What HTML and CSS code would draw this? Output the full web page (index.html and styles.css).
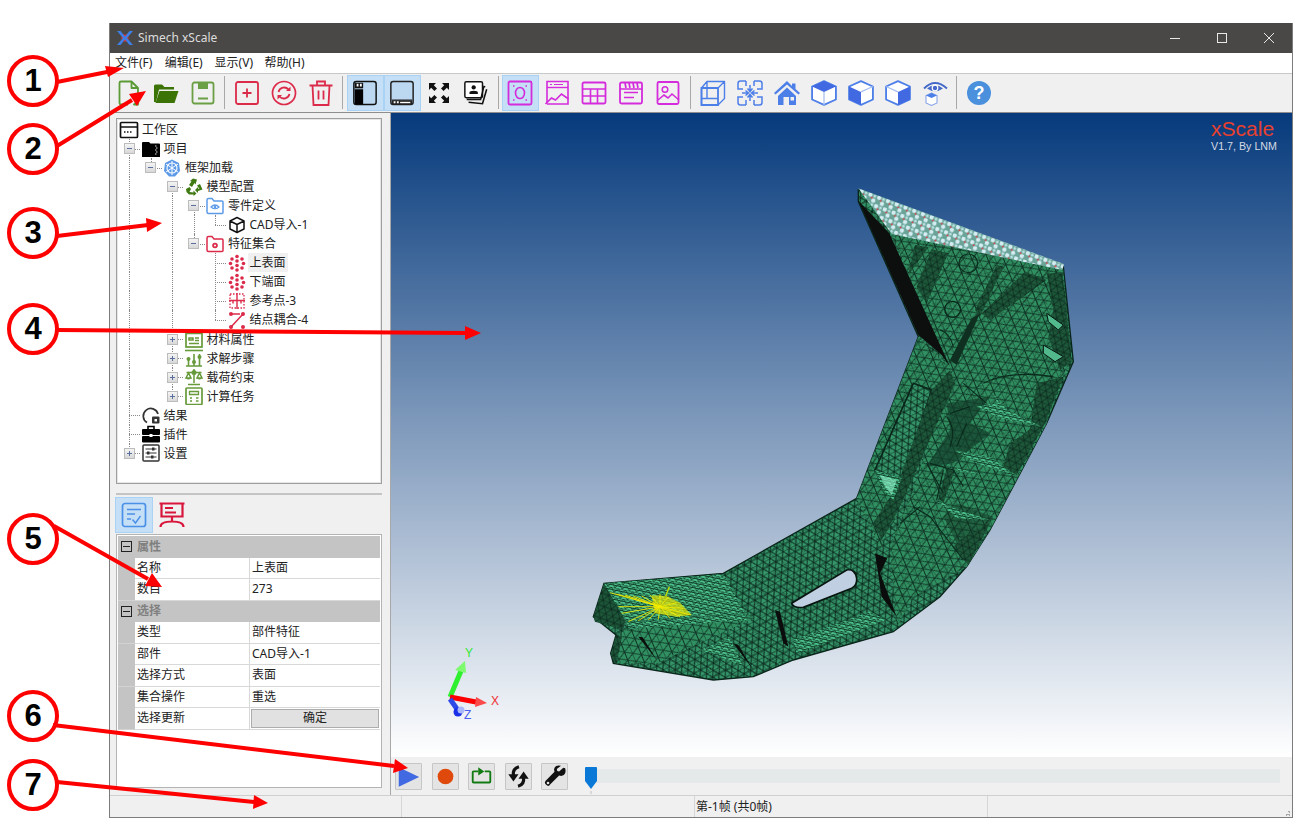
FILE: index.html
```html
<!DOCTYPE html>
<html lang="zh">
<head>
<meta charset="utf-8">
<title>Simech xScale</title>
<link rel="stylesheet" href="styles.css">
</head>
<body>
<svg class="defs" width="0" height="0" aria-hidden="true">
  <defs>
    <pattern id="mesh" width="22" height="36" patternUnits="userSpaceOnUse" patternTransform="rotate(-28)">
      <rect width="22" height="36" fill="#35966a"/>
      <path d="M0 0H22M0 18H22M0 0L11 18L22 0M0 36L11 18L22 36" fill="none" stroke="#0c2e20" stroke-width="2.800"/>
    </pattern>
    <pattern id="meshb" width="26" height="44" patternUnits="userSpaceOnUse" patternTransform="rotate(68)">
      <rect width="26" height="44" fill="#319062"/>
      <path d="M0 0H26M0 22H26M0 0L13 22L26 0M0 44L13 22L26 44" fill="none" stroke="#0c2e20" stroke-width="2.800"/>
    </pattern>
    <pattern id="meshd" width="22" height="36" patternUnits="userSpaceOnUse" patternTransform="rotate(20)">
      <rect width="22" height="36" fill="#1d5639"/>
      <path d="M0 0H22M0 18H22M0 0L11 18L22 0M0 36L11 18L22 36" fill="none" stroke="#0a251a" stroke-width="2.400"/>
    </pattern>
    <pattern id="meshl" width="22" height="14" patternUnits="userSpaceOnUse" patternTransform="rotate(12)">
      <rect width="22" height="14" fill="#4cc08a"/>
      <path d="M0 0H22M0 7H22M0 0L11 14L22 0" fill="none" stroke="#0c3523" stroke-width="2.600"/>
    </pattern>
    <pattern id="over" width="47" height="71" patternUnits="userSpaceOnUse" patternTransform="rotate(37)">
      <path d="M0 0L47 12M0 35L47 47M0 0L23 71M47 12L30 71M12 35L40 0" fill="none" stroke="#0a2a1c" stroke-width="2" opacity=".55"/>
    </pattern>
    <pattern id="dots" width="28" height="27" patternUnits="userSpaceOnUse" patternTransform="rotate(20.500 835 60)">
      <rect width="28" height="27" fill="#6aa498"/>
      <circle cx="6" cy="6" r="6.500" fill="#d3edf2"/>
      <circle cx="20" cy="20" r="6.500" fill="#d3edf2"/>
      <circle cx="20" cy="6" r="4.500" fill="#b7e0e2"/>
      <circle cx="13" cy="13" r="2.800" fill="#e5333a"/>
    </pattern>

    <symbol id="i-new" viewBox="0 0 26 26"><path d="M12 24.500H5a1.500 1.500 0 0 1-1.500-1.500V3A1.500 1.500 0 0 1 5 1.500h10.500l6.500 6.500v8M15.500 1.500V8H22M18 24.500l4-3.500v3.500z" fill="none" stroke="#5b9a35" stroke-width="1.800" stroke-linejoin="round"/></symbol>
    <symbol id="i-open" viewBox="0 0 26 26"><path d="M1 22V6q0-1.500 1.500-1.500H9l2.500 2.500H21v2.500H6L3 22z" fill="#3c7306"/><path d="M6.500 11H25.500L21.500 23H2.500z" fill="#3c7306"/></symbol>
    <symbol id="i-save" viewBox="0 0 26 26"><rect x="2.500" y="2.500" width="21" height="21" rx="2" fill="none" stroke="#6b9f45" stroke-width="1.800"/><rect x="8" y="3" width="10" height="6" fill="#6b9f45"/><path d="M8 18.500H18" stroke="#6b9f45" stroke-width="2"/></symbol>
    <symbol id="i-add" viewBox="0 0 26 26"><rect x="2" y="2" width="22" height="22" rx="2" fill="none" stroke="#dc2a4a" stroke-width="1.800"/><path d="M13 8.500v9M8.500 13h9" stroke="#dc2a4a" stroke-width="1.800"/></symbol>
    <symbol id="i-sync" viewBox="0 0 26 26"><circle cx="13" cy="13" r="11.500" fill="none" stroke="#dc2a4a" stroke-width="1.700"/><path d="M7.500 12a5.800 5.800 0 0 1 10-2.500M18.500 14a5.800 5.800 0 0 1-10 2.500" fill="none" stroke="#dc2a4a" stroke-width="1.800"/><path d="M19.500 6.500v4.500h-4.500zM6.500 19.500V15H11z" fill="#dc2a4a"/></symbol>
    <symbol id="i-trash" viewBox="0 0 26 26"><path d="M1.500 5.500h23M9 5.500V1.500h8v4M4.500 5.500l1 19.500h15l1-19.500M10.500 10.500v9M15.500 10.500v9" fill="none" stroke="#dc2a4a" stroke-width="1.800"/></symbol>
    <symbol id="i-left" viewBox="0 0 28 28"><rect x="2" y="1.500" width="24" height="25" rx="2.500" fill="#bcd8f1" stroke="#111" stroke-width="1.600"/><path d="M3 10h9v16H4q-1 0-1-1z" fill="#000"/><path d="M3 3h9v6H3z" fill="#111"/><path d="M5 4h2v3H5zM8.500 4h2v3h-2z" fill="#fff"/></symbol>
    <symbol id="i-bottom" viewBox="0 0 28 28"><rect x="2" y="1.500" width="24" height="25" rx="2.500" fill="#bcd8f1" stroke="#222" stroke-width="1.600"/><path d="M3 21h22v1.500H3z" fill="#222"/><path d="M3 22.500h22V25q0 1-1 1H4q-1 0-1-1z" fill="#222"/><path d="M5 23h2v2H5zM8.500 23h2v2h-2z" fill="#fff"/><path d="M12 23.500h11v1.500H12z" fill="#fff"/></symbol>
    <symbol id="i-fit" viewBox="0 0 26 26"><path d="M3 3h7L7.800 5.200 11 8.400 8.400 11 5.200 7.800 3 10zM23 3v7l-2.200-2.200L17.600 11 15 8.400l3.200-3.200L16 3zM3 23v-7l2.200 2.200L8.400 15 11 17.600l-3.200 3.200L10 23zM23 23h-7l2.200-2.200L15 17.600l2.600-2.600 3.200 3.200L23 16z" fill="#111"/></symbol>
    <symbol id="i-photos" viewBox="0 0 28 28"><rect x="2" y="2" width="19" height="17" rx="1.500" fill="#fff" stroke="#111" stroke-width="1.600"/><circle cx="11.500" cy="8" r="2.300" fill="#111"/><path d="M7 15v-1.500q0-2 4.500-2t4.500 2V15z" fill="#111"/><path d="M4 21h15l3.500-14 1.500.5" fill="none" stroke="#111" stroke-width="1.500"/><path d="M6 24l15 1.500 4.500-15.500" fill="none" stroke="#111" stroke-width="1.700"/></symbol>
    <symbol id="i-m1" viewBox="0 0 26 26"><rect x="1.500" y="1.500" width="23" height="23" rx="1.500" fill="none" stroke="#d42bdc" stroke-width="1.800"/><ellipse cx="13" cy="13" rx="4.500" ry="5.500" fill="none" stroke="#d42bdc" stroke-width="1.600"/><path d="M6 6h1.500M18.500 6H20M6 20h1.500M18.500 20H20" stroke="#d42bdc" stroke-width="1.400"/></symbol>
    <symbol id="i-m2" viewBox="0 0 26 26"><path d="M3 23V1.500h21V24H3" fill="none" stroke="#d42bdc" stroke-width="1.600"/><path d="M3 7.500h21" stroke="#d42bdc" stroke-width="1.400"/><path d="M6 4.500h2M10 4.500h9" stroke="#d42bdc" stroke-width="1.200"/><path d="M1.500 24l6-6 4 2 6-6 7 5" fill="none" stroke="#d42bdc" stroke-width="1.700"/></symbol>
    <symbol id="i-m3" viewBox="0 0 26 26"><rect x="1.500" y="2.500" width="23" height="21" rx="1.500" fill="none" stroke="#d42bdc" stroke-width="1.800"/><path d="M1.500 9h23M1.500 16h23M9.500 9v14.500M16.500 9v14.500" stroke="#d42bdc" stroke-width="1.600"/></symbol>
    <symbol id="i-m4" viewBox="0 0 26 26"><rect x="2" y="2.500" width="22" height="21" rx="1.500" fill="none" stroke="#d42bdc" stroke-width="1.800"/><path d="M2 9h22M6 12.500h14M6 17.500h10" stroke="#d42bdc" stroke-width="1.600"/><path d="M7 3l1 5M11 3l1 5M15 3l1 5M19 3l1 5" stroke="#d42bdc" stroke-width="1.700"/></symbol>
    <symbol id="i-m5" viewBox="0 0 26 26"><rect x="2.500" y="2" width="21" height="22" rx="1.500" fill="none" stroke="#d42bdc" stroke-width="1.800"/><circle cx="10" cy="9.500" r="2.800" fill="none" stroke="#d42bdc" stroke-width="1.500"/><path d="M3 20l6-5 4 3 4-4 7 6" fill="none" stroke="#d42bdc" stroke-width="1.600"/></symbol>
    <symbol id="i-b1" viewBox="0 0 26 26"><path d="M7 1.500h17.500v17l-6.500 6.500H1.500V8zM18 8l6.500-6.500M7 1.500v17H1.500M7 18.500h11" fill="none" stroke="#4d7fe8" stroke-width="1.400" stroke-linejoin="round"/><path d="M1.500 8H18v17H1.500z" fill="none" stroke="#4d7fe8" stroke-width="1.800"/></symbol>
    <symbol id="i-b2" viewBox="0 0 26 26"><path d="M9 1H3.500Q1 1 1 3.500V9h5M17 1h5.500Q25 1 25 3.500V9h-5M9 25H3.500Q1 25 1 22.500V17h5M17 25h5.500q2.500 0 2.500-2.500V17h-5M9 1v5M17 1v5M9 25v-5M17 25v-5" fill="none" stroke="#4d7fe8" stroke-width="1.500"/><path d="M13 5v6M10.500 8.500l2.500 3 2.500-3M13 21v-6M10.500 17.500l2.500-3 2.500 3M5 13h6M8.500 10.500l3 2.500-3 2.500M21 13h-6M17.500 10.500l-3 2.500 3 2.500" fill="none" stroke="#4d7fe8" stroke-width="1.500"/></symbol>
    <symbol id="i-home" viewBox="0 0 26 26"><path d="M13 1L0 13l1.500 1.500L13 4.500l11.500 10L26 13l-4.500-4V3.500h-3.500V6z" fill="#4d7fe8"/><path d="M4 16L13 7.500l9 8.500V25H15V17H9.500v8H4zM16.500 17H20v3.500h-3.500z" fill="#4d7fe8" fill-rule="evenodd"/></symbol>
    <symbol id="i-c1" viewBox="1 1 24 24"><path d="M13 2l11 5v12l-11 5L2 19V7z" fill="#fff" stroke="#4d7fe8" stroke-width="1.700" stroke-linejoin="round"/><path d="M13 2l11 5-11 5L2 7z" fill="#4169e1"/><path d="M13 12v12" stroke="#a8c0f0" stroke-width="1.200"/></symbol>
    <symbol id="i-c2" viewBox="1 1 24 24"><path d="M13 2l11 5v12l-11 5L2 19V7z" fill="#fff" stroke="#4d7fe8" stroke-width="1.700" stroke-linejoin="round"/><path d="M2 7l11 5v12L2 19z" fill="#4169e1"/><path d="M13 12L24 7" stroke="#a8c0f0" stroke-width="1.200"/></symbol>
    <symbol id="i-c3" viewBox="1 1 24 24"><path d="M13 2l11 5v12l-11 5L2 19V7z" fill="#fff" stroke="#4d7fe8" stroke-width="1.700" stroke-linejoin="round"/><path d="M24 7l-11 5v12l11-5z" fill="#4169e1"/><path d="M13 12L2 7" stroke="#a8c0f0" stroke-width="1.200"/></symbol>
    <symbol id="i-eye" viewBox="0 0 26 26"><path d="M2 8.500q11-11 23 0" fill="none" stroke="#4469c8" stroke-width="1.800"/><path d="M5 8.500q8-6.500 16 0-8 5.500-16 0z" fill="#4469c8"/><circle cx="13" cy="8" r="3.400" fill="#fff"/><circle cx="13" cy="8" r="2.200" fill="#4469c8"/><path d="M9.500 13l5.500 2.500v7.500l-5.500 2.500L4 23v-7.500z" fill="#fff" stroke="#88a4ea" stroke-width="1.100"/><path d="M9.500 13l5.500 2.500-5.500 2.500L4 15.500z" fill="#4d7fe8"/></symbol>

    <symbol id="t-work" viewBox="0 0 20 18"><rect x="1.500" y="1.500" width="17" height="15" rx="1" fill="#fff" stroke="#111" stroke-width="1.700"/><path d="M1.500 6h17" stroke="#111" stroke-width="1.500"/><path d="M5 11h1.500M8 11h1.500M11 11h1.500" stroke="#111" stroke-width="1.500"/></symbol>
    <symbol id="t-proj" viewBox="0 0 20 18"><path d="M1 17V3q0-1 1-1h6l1.500 1.500H18q1 0 1 1V17z" fill="#000"/><path d="M14 5.500h1.500v1H14zM15 7.500h1.500v1H15zM14 9.500h1.500v1H14zM15 11.500h1.500v1H15zM14 13.500h1.500v1H14z" fill="#ddd"/></symbol>
    <symbol id="t-frame" viewBox="0 0 18 18"><path d="M9 .5l7 3.500 1 8-5 5.500H6L1 12l1-8z" fill="#5c9ae8"/><circle cx="9" cy="9" r="5" fill="none" stroke="#fff" stroke-width="1.100"/><path d="M9 2v14M3 5l12 8M15 5L3 13" stroke="#fff" stroke-width="1"/></symbol>
    <symbol id="t-recycle" viewBox="0 0 18 18"><path d="M8 .5l4 1-1.500 5-1-1.500-2.500 4L4 7l2.500-3.500L5 3zM15 6l2.500 5.500L13 13v2l-3-3 3-3v1.500L14.500 11l-2.500-3.500zM1 11l3.500-2L6 11l-1.500 3 4 .5v-2l3 3-3 2.500v-1.500H4L1.500 14z" fill="#3f7a12"/></symbol>
    <symbol id="t-fblue" viewBox="0 0 18 18"><path d="M1 3q0-1.500 1.500-1.500H6L8 4h8q1 0 1 1v10.500q0 1-1 1H2.500Q1 16.500 1 15z" fill="#fff" stroke="#5c9ae8" stroke-width="1.500"/><path d="M5 10q4-4 8 0-4 3.500-8 0z" fill="none" stroke="#5c9ae8" stroke-width="1.200"/><circle cx="9" cy="10" r="1.200" fill="#5c9ae8"/></symbol>
    <symbol id="t-cube" viewBox="0 0 18 18"><path d="M9 1.500l7 3.500v8l-7 3.500L2 13V5zM2 5l7 3.500L16 5M9 8.500v8" fill="none" stroke="#111" stroke-width="1.500" stroke-linejoin="round"/></symbol>
    <symbol id="t-fred" viewBox="0 0 18 18"><path d="M1 3q0-1.500 1.500-1.500H6L8 4h8q1 0 1 1v10.500q0 1-1 1H2.500Q1 16.500 1 15z" fill="#fff" stroke="#dc2a4a" stroke-width="1.500"/><circle cx="9" cy="10.500" r="2.800" fill="#dc2a4a"/><circle cx="9" cy="10.500" r="1" fill="#fff"/></symbol>
    <symbol id="t-dots" viewBox="0 0 18 18" fill="#dc2a4a"><circle cx="9" cy="2.500" r="1.800"/><circle cx="4" cy="5" r="1.800"/><circle cx="14" cy="5" r="1.800"/><circle cx="9" cy="7" r="1.800"/><circle cx="2.500" cy="9.500" r="1.800"/><circle cx="15.500" cy="9.500" r="1.800"/><circle cx="9" cy="11.500" r="1.800"/><circle cx="4" cy="14" r="1.800"/><circle cx="14" cy="14" r="1.800"/><circle cx="9" cy="16" r="1.800"/></symbol>
    <symbol id="t-ref" viewBox="0 0 18 18"><rect x="2" y="2" width="14" height="14" fill="none" stroke="#dc2a4a" stroke-width="1.300" stroke-dasharray="1.500 1.500"/><path d="M9 1v16M1 8.500h16M5 8.500v3M13 8.500v3" stroke="#dc2a4a" stroke-width="1.400"/></symbol>
    <symbol id="t-couple" viewBox="0 0 18 18"><path d="M3 16L15 3M4 3h8" stroke="#dc2a4a" stroke-width="1.500"/><circle cx="3" cy="3" r="2" fill="#dc2a4a"/><circle cx="15" cy="3" r="2" fill="#dc2a4a"/><circle cx="3" cy="16" r="2" fill="#dc2a4a"/><circle cx="15" cy="16" r="2" fill="#dc2a4a"/></symbol>
    <symbol id="t-mat" viewBox="0 0 18 18"><rect x="1" y="1" width="16" height="16" fill="none" stroke="#679a3a" stroke-width="1.700"/><path d="M1 3.500h16M4 8h4v2H4zM10 8h4M10 10.500h4M4 13.500h10" stroke="#679a3a" stroke-width="1.500" fill="none"/></symbol>
    <symbol id="t-step" viewBox="0 0 18 18"><path d="M0 1.500h18" stroke="#679a3a" stroke-width="1.600"/><path d="M3.500 9v8M9 5v12M14.500 5v12M1 17h16" stroke="#679a3a" stroke-width="1.600"/><circle cx="3.500" cy="10" r="2" fill="#679a3a"/><circle cx="9" cy="13" r="2" fill="#679a3a"/><circle cx="14.500" cy="8" r="2" fill="#679a3a"/></symbol>
    <symbol id="t-scale" viewBox="0 0 18 18"><path d="M9 1v14M3 16.500h12M1.500 4.500h15M3.500 5L1 10h5zM14.500 5L12 10h5z" fill="none" stroke="#679a3a" stroke-width="1.500"/><path d="M1 10h5q-2.500 3-5 0zM12 10h5q-2.500 3-5 0z" fill="#679a3a"/><circle cx="9" cy="4.500" r="2.500" fill="#679a3a"/></symbol>
    <symbol id="t-calc" viewBox="0 0 18 18"><rect x="1" y="1" width="16" height="16.500" rx="1" fill="none" stroke="#679a3a" stroke-width="1.700"/><path d="M4.500 4.500h9v3h-9z" fill="none" stroke="#679a3a" stroke-width="1.300"/><path d="M5 11h2M11 11h2.500M5 14h2M11 14h2.500" stroke="#679a3a" stroke-width="1.600"/></symbol>
    <symbol id="t-result" viewBox="0 0 20 18"><path d="M6 16.500A7.500 7.500 0 1 1 17 8" fill="none" stroke="#333" stroke-width="1.700"/><rect x="11" y="10.500" width="7.500" height="7" rx="1" fill="#333"/><rect x="13.500" y="13" width="2.500" height="2.500" fill="#fff"/></symbol>
    <symbol id="t-tool" viewBox="0 0 20 18"><path d="M7 4V1.500h6V4" fill="none" stroke="#000" stroke-width="1.600"/><rect x="1" y="4" width="18" height="6" rx="1" fill="#000"/><rect x="1" y="11" width="18" height="6.500" rx="1" fill="#000"/><path d="M8.500 9h3v3h-3z" fill="#fff"/></symbol>
    <symbol id="t-set" viewBox="0 0 18 18"><rect x="1" y="1" width="16" height="16" rx="1" fill="#fff" stroke="#333" stroke-width="1.500"/><path d="M3.500 5h11M3.500 9h11M3.500 13h11" stroke="#333" stroke-width="1.100"/><rect x="10" y="3.500" width="2.500" height="3" fill="#333"/><rect x="5" y="7.500" width="2.500" height="3" fill="#333"/><rect x="9" y="11.500" width="2.500" height="3" fill="#333"/></symbol>

    <symbol id="p-check" viewBox="0 0 26 26"><rect x="1.500" y="1.500" width="23" height="23" rx="2.500" fill="none" stroke="#4a90e8" stroke-width="1.700"/><path d="M6 7.500h14M6 12h8M6 17h4M11.500 17.500l3 3.500 5-7" fill="none" stroke="#4a90e8" stroke-width="1.400"/></symbol>
    <symbol id="p-pres" viewBox="0 0 26 26"><path d="M2.500 1.500v13h21v-13M.5 1.500h25M6 6h8M6 10.500h11M13 15v5M1.500 25c0-4 4-5.500 11.500-5.500s11.500 1.500 11.500 5.500" fill="none" stroke="#d8163c" stroke-width="2.200"/></symbol>

    <symbol id="c-play" viewBox="0 0 27 27"><path d="M3 3.500L25 14 3 24.500z" fill="#4169e1"/></symbol>
    <symbol id="c-rec" viewBox="0 0 27 27"><circle cx="13.500" cy="13.500" r="8.500" fill="#df4a0c"/></symbol>
    <symbol id="c-loop" viewBox="0 0 27 27"><path d="M10 8H5q-1 0-1 1v10q0 1 1 1h17q1 0 1-1V9q0-1-1-1h-5" fill="none" stroke="#127a12" stroke-width="2"/><path d="M10 3.500l6.500 4.500L10 12.500z" fill="#127a12"/></symbol>
    <symbol id="c-swap" viewBox="0 0 27 27"><path d="M14 3Q7 5 8 12M13 24q7-2 6-9" fill="none" stroke="#111" stroke-width="3.400"/><path d="M2.500 11h11L8 19zM13.500 16h11L19 8z" fill="#111"/></symbol>
    <symbol id="c-wrench" viewBox="0 0 27 27"><path d="M23 4l-4.500 4-2-.5L16 5.500 20.500 2q-5-1.500-7 2-1 2 0 4.500L4 18q-2 2 .5 4.500T9 22l9.500-9.500q3 1 5-.5 3-3 1.500-7.500z" fill="#111"/><circle cx="6.500" cy="20.500" r="1.400" fill="#e4e4e4"/></symbol>
  </defs>
</svg>

<div class="window">
  <header class="titlebar">
    <svg class="logo" viewBox="0 0 18 18" width="18" height="18"><path d="M6.500 6.500L11.500 11.500M11.500 6.500L6.500 11.500" stroke="#e0303a" stroke-width="4"/><path d="M1 2h3.500L9 7.500 13.500 2H17L11 9l6 7h-3.500L9 10.500 4.500 16H1l6-7z" fill="#3d7fe6"/></svg>
    <span class="title">Simech xScale</span>
    <div class="winbtns">
      <svg width="12" height="12" viewBox="0 0 12 12"><path d="M1 6.500h10" stroke="#e8e8e8"/></svg>
      <svg width="12" height="12" viewBox="0 0 12 12"><rect x="1.500" y="1.500" width="9" height="9" fill="none" stroke="#e8e8e8"/></svg>
      <svg width="12" height="12" viewBox="0 0 12 12"><path d="M1 1l10 10M11 1L1 11" stroke="#e8e8e8"/></svg>
    </div>
  </header>

  <nav class="menubar">
    <span class="menu">文件(F)</span><span class="menu">编辑(E)</span><span class="menu">显示(V)</span><span class="menu">帮助(H)</span>
  </nav>

  <div class="toolbar">
    <span class="tbtn"><svg><use href="#i-new"/></svg></span>
    <span class="tbtn"><svg><use href="#i-open"/></svg></span>
    <span class="tbtn"><svg><use href="#i-save"/></svg></span>
    <i class="sep"></i>
    <span class="tbtn"><svg><use href="#i-add"/></svg></span>
    <span class="tbtn"><svg><use href="#i-sync"/></svg></span>
    <span class="tbtn"><svg><use href="#i-trash"/></svg></span>
    <i class="sep"></i>
    <span class="tbtn on"><svg><use href="#i-left"/></svg></span>
    <span class="tbtn on"><svg><use href="#i-bottom"/></svg></span>
    <span class="tbtn"><svg><use href="#i-fit"/></svg></span>
    <span class="tbtn"><svg><use href="#i-photos"/></svg></span>
    <i class="sep"></i>
    <span class="tbtn on"><svg><use href="#i-m1"/></svg></span>
    <span class="tbtn"><svg><use href="#i-m2"/></svg></span>
    <span class="tbtn"><svg><use href="#i-m3"/></svg></span>
    <span class="tbtn"><svg><use href="#i-m4"/></svg></span>
    <span class="tbtn"><svg><use href="#i-m5"/></svg></span>
    <i class="sep"></i>
    <span class="tbtn"><svg><use href="#i-b1"/></svg></span>
    <span class="tbtn"><svg><use href="#i-b2"/></svg></span>
    <span class="tbtn"><svg><use href="#i-home"/></svg></span>
    <span class="tbtn"><svg><use href="#i-c1"/></svg></span>
    <span class="tbtn"><svg><use href="#i-c2"/></svg></span>
    <span class="tbtn"><svg><use href="#i-c3"/></svg></span>
    <span class="tbtn"><svg><use href="#i-eye"/></svg></span>
    <i class="sep"></i>
    <span class="tbtn"><svg viewBox="0 0 26 26"><circle cx="13" cy="13" r="12" fill="#4a90dd"/><text x="13" y="19" class="help">?</text></svg></span>
  </div>

  <div class="main">
    <aside class="side">
      <div class="tree">
        <div class="row"><span class="g"><svg class="ti"><use href="#t-work"/></svg></span><span class="lb">工作区</span></div>
        <div class="row"><span class="g t"><b class="x"></b></span><span class="ic"><svg class="ti"><use href="#t-proj"/></svg></span><span class="lb">项目</span></div>
        <div class="row"><span class="g v"></span><span class="g l"><b class="x"></b></span><span class="ic"><svg class="ti"><use href="#t-frame"/></svg></span><span class="lb">框架加载</span></div>
        <div class="row"><span class="g v"></span><span class="g"></span><span class="g b"><b class="x"></b></span><span class="ic"><svg class="ti"><use href="#t-recycle"/></svg></span><span class="lb">模型配置</span></div>
        <div class="row"><span class="g v"></span><span class="g"></span><span class="g v"></span><span class="g b"><b class="x"></b></span><span class="ic"><svg class="ti"><use href="#t-fblue"/></svg></span><span class="lb">零件定义</span></div>
        <div class="row"><span class="g v"></span><span class="g"></span><span class="g v"></span><span class="g v"></span><span class="g l"></span><span class="ic"><svg class="ti"><use href="#t-cube"/></svg></span><span class="lb">CAD导入-1</span></div>
        <div class="row"><span class="g v"></span><span class="g"></span><span class="g v"></span><span class="g l"><b class="x"></b></span><span class="ic"><svg class="ti"><use href="#t-fred"/></svg></span><span class="lb">特征集合</span></div>
        <div class="row"><span class="g v"></span><span class="g"></span><span class="g v"></span><span class="g"></span><span class="g t"></span><span class="ic"><svg class="ti"><use href="#t-dots"/></svg></span><span class="lb sel">上表面</span></div>
        <div class="row"><span class="g v"></span><span class="g"></span><span class="g v"></span><span class="g"></span><span class="g t"></span><span class="ic"><svg class="ti"><use href="#t-dots"/></svg></span><span class="lb">下端面</span></div>
        <div class="row"><span class="g v"></span><span class="g"></span><span class="g v"></span><span class="g"></span><span class="g t"></span><span class="ic"><svg class="ti"><use href="#t-ref"/></svg></span><span class="lb">参考点-3</span></div>
        <div class="row"><span class="g v"></span><span class="g"></span><span class="g v"></span><span class="g"></span><span class="g l"></span><span class="ic"><svg class="ti"><use href="#t-couple"/></svg></span><span class="lb">结点耦合-4</span></div>
        <div class="row"><span class="g v"></span><span class="g"></span><span class="g t"><b class="x p"></b></span><span class="ic"><svg class="ti"><use href="#t-mat"/></svg></span><span class="lb">材料属性</span></div>
        <div class="row"><span class="g v"></span><span class="g"></span><span class="g t"><b class="x p"></b></span><span class="ic"><svg class="ti"><use href="#t-step"/></svg></span><span class="lb">求解步骤</span></div>
        <div class="row"><span class="g v"></span><span class="g"></span><span class="g t"><b class="x p"></b></span><span class="ic"><svg class="ti"><use href="#t-scale"/></svg></span><span class="lb">载荷约束</span></div>
        <div class="row"><span class="g v"></span><span class="g"></span><span class="g l"><b class="x p"></b></span><span class="ic"><svg class="ti"><use href="#t-calc"/></svg></span><span class="lb">计算任务</span></div>
        <div class="row"><span class="g t"></span><span class="ic"><svg class="ti"><use href="#t-result"/></svg></span><span class="lb">结果</span></div>
        <div class="row"><span class="g t"></span><span class="ic"><svg class="ti"><use href="#t-tool"/></svg></span><span class="lb">插件</span></div>
        <div class="row"><span class="g l"><b class="x p"></b></span><span class="ic"><svg class="ti"><use href="#t-set"/></svg></span><span class="lb">设置</span></div>
      </div>

      <div class="split"></div>

      <div class="tabs">
        <span class="tab on"><svg><use href="#p-check"/></svg></span>
        <span class="tab"><svg><use href="#p-pres"/></svg></span>
      </div>

      <div class="props">
        <div class="phead"><span class="pbox"></span><span>属性</span></div>
        <div class="prow"><span class="pk">名称</span><span class="pv">上表面</span></div>
        <div class="prow"><span class="pk">数目</span><span class="pv">273</span></div>
        <div class="phead"><span class="pbox"></span><span>选择</span></div>
        <div class="prow"><span class="pk">类型</span><span class="pv">部件特征</span></div>
        <div class="prow"><span class="pk">部件</span><span class="pv">CAD导入-1</span></div>
        <div class="prow"><span class="pk">选择方式</span><span class="pv">表面</span></div>
        <div class="prow"><span class="pk">集合操作</span><span class="pv">重选</span></div>
        <div class="prow"><span class="pk">选择更新</span><span class="pv btncell"><button class="ok" type="button">确定</button></span></div>
      </div>
    </aside>

    <section class="viewcol">
      <div class="viewport">
        <div class="brand"><div class="bname">xScale</div><div class="bver">V1.7, By LNM</div></div>
        <svg class="model" viewBox="0 0 1560 1560" width="520" height="520">
          <path d="M835 60L1450 290L1480 575L1400 760L1230 1080L1160 1190L1080 1280L940 1385L640 1470L520 1520L400 1530L100 1480L92 1450L108 1395L40 1340L72 1240L430 1210L830 985L1015 500L835 95Z" fill="url(#mesh)" stroke="#0a251a" stroke-width="4"/>
          <path d="M1015 500L1110 600L940 1060L900 1130L830 985Z" fill="url(#meshb)"/>
          <path d="M940 190L1450 300L1470 560L1400 760L1230 1080L1160 1190L1000 1280L950 1370L930 1130L1000 960L1110 610L1050 500Z" fill="url(#meshb)"/>
          <path d="M835 60L1450 290L1480 575L1400 760L1230 1080L1160 1190L1080 1280L940 1385L640 1470L520 1520L400 1530L100 1480L92 1450L108 1395L40 1340L72 1240L430 1210L830 985L1015 500L835 95Z" fill="url(#over)"/>
          <path d="M835 92L928 190L1110 590L1085 555L1015 495Z" fill="#0d0f0e"/>
          <path d="M1000 640L1055 660L965 930L885 900Z" fill="url(#mesh)" stroke="#0a251a" stroke-width="5"/>
          <path d="M1110 600L1125 640L960 1010L905 1110L880 1060L950 950L1055 660Z" fill="url(#meshd)"/>
          <path d="M1005 225L1045 232L985 315ZM1055 238L1105 250L1040 400L1010 350ZM1250 285L1270 290L1200 440L1185 420ZM1335 305L1400 330L1230 450L1205 430Z" fill="url(#meshd)"/>
          <path d="M1200 430L1175 445L1110 570L1130 585Z" fill="#0f3020"/>
          <path d="M1400 310L1448 310L1475 575L1440 600L1405 500L1420 420Z" fill="url(#meshd)"/>
          <path d="M1450 620L1395 760L1310 915L1270 890L1290 820L1350 780L1370 640Z" fill="url(#meshd)"/>
          <path d="M1100 895L1125 900L1090 1000L1075 985ZM1140 1110L1230 1060L1165 1185L1120 1130Z" fill="url(#meshd)"/>
          <path d="M1130 1120L1230 1060L1240 1040L1130 1000L1090 1040Z" fill="#0f3020" opacity=".45"/>
          <path d="M1100 700L1230 680L1170 760L1230 790L1120 880L1040 890L1110 780Z" fill="#123d29" opacity=".7"/>
          <g fill="none" stroke="#0a2a1c" stroke-width="3.500">
            <circle cx="1165" cy="280" r="28"/><circle cx="1118" cy="418" r="24"/><path d="M1080 480q30 10 40 50M1150 640L1220 700M1210 640q80-40 210-20M1110 730l60-20M1100 740q30 40 10 90M1160 760l-30 70M1050 880l70 20 30 50M1040 880l50 90M1000 1010l50 30 100 130M1090 900l-20 90M960 1060l60-50"/>
          </g>
          <path d="M1190 710L1240 700L1385 770L1260 745ZM1240 670L1290 730L1260 720Z" fill="url(#meshl)"/>
          <path d="M1120 840L1230 860L1310 920L1190 880ZM1130 895L1210 915L1140 905Z" fill="url(#meshl)"/>
          <path d="M1060 985L1110 1010L1230 1050L1130 1045Z" fill="url(#meshl)"/>
          <path d="M1400 430L1450 465L1435 480L1405 455ZM1390 525L1450 560L1425 575L1390 550Z" fill="#52b98c" stroke="#07150f" stroke-width="3"/>
          <path d="M885 900L965 925L940 990L910 960Z" fill="url(#meshl)"/>
          <path d="M900 915L950 930L935 975L915 950Z" fill="#8cf0c6" opacity=".65"/>
          <path d="M72 1240L430 1212L495 1330L130 1355Z" fill="url(#meshl)"/>
          <path d="M72 1240L40 1340L45 1355L130 1380L135 1350ZM108 1395L92 1455L110 1482L150 1470L135 1400Z" fill="url(#meshd)"/>
          <path d="M130 1380L495 1330L520 1345L230 1480L110 1480Z" fill="url(#meshb)"/>
          <path d="M140 1358L495 1332L500 1350L145 1376Z" fill="url(#meshl)"/>
          <path d="M360 1440L450 1405L490 1490L420 1460ZM640 1410L870 1325L920 1350L650 1450Z" fill="url(#meshl)"/>
          <path d="M635 1300L800 1200Q825 1195 830 1225Q832 1245 815 1255L670 1312Q640 1315 635 1300Z" fill="#c0cfe1" stroke="#07150f" stroke-width="5"/>
          <path d="M585 1320L600 1325L625 1430L610 1420ZM885 1150L922 1165L900 1210L950 1340L905 1280ZM175 1400L188 1402L232 1472ZM460 1420L475 1425L520 1500Z" fill="#0b0d0c"/>
          <g stroke="#f4ec00" stroke-width="2.500">
            <path d="M90 1268L240 1310M110 1272L240 1310M135 1275L240 1310M160 1278L240 1310M185 1278L240 1310M210 1275L240 1310M240 1272V1310M265 1280L240 1310M290 1298L240 1310M310 1315L240 1310M332 1335L240 1310M300 1340L240 1310M270 1345L240 1310M235 1348L240 1310M205 1350L240 1310M175 1352L240 1310M145 1355L240 1310M115 1310L240 1310M125 1330L240 1310"/>
          </g>
          <path d="M215 1276L260 1278L300 1298L335 1335L290 1340L225 1330Z" fill="#f4ec00" opacity=".65"/>
          <path d="M257 1278L268 1250" stroke="#c4e000" stroke-width="4"/>
          <path d="M835 55L1452 282L1447 300L935 192Z" fill="url(#dots)"/>
        </svg>
        <svg class="triad" viewBox="0 0 70 80" width="70" height="80">
          <path d="M9 49L20 23" stroke="#2ef02e" stroke-width="5"/><path d="M24 13L25 25 14 22z" fill="#7dfa6d"/>
          <path d="M9 49L35 54" stroke="#f00" stroke-width="5"/><path d="M46 55L34 59 35 49z" fill="#fa4a4a"/>
          <path d="M9 51L16 61" stroke="#2e4be8" stroke-width="5"/><circle cx="17" cy="64" r="4.500" fill="#1a2fe8"/><circle cx="20" cy="62" r="3.500" fill="#a8b8fa"/>
          <text x="24" y="9" class="ty">Y</text><text x="50" y="57" class="tx">X</text><text x="23" y="71" class="tz">Z</text>
        </svg>
      </div>
      <div class="controls">
        <span class="cbtn"><svg><use href="#c-play"/></svg></span>
        <span class="cbtn"><svg><use href="#c-rec"/></svg></span>
        <span class="cbtn"><svg><use href="#c-loop"/></svg></span>
        <span class="cbtn"><svg><use href="#c-swap"/></svg></span>
        <span class="cbtn"><svg><use href="#c-wrench"/></svg></span>
        <div class="slider"><svg class="thumb" viewBox="0 0 12 27" width="12" height="27"><path d="M0 1q0-1 1-1h10q1 0 1 1v13l-6 8-6-8z" fill="#0a78d7"/><path d="M5 24h2v3H5z" fill="#d8d8d8"/></svg></div>
      </div>
    </section>
  </div>

  <footer class="status">
    <span class="sec s1"></span><span class="sec"></span><span class="sec">第-1帧 (共0帧)</span><span class="sec last"></span>
  </footer>
</div>

<svg class="notes" viewBox="0 0 1308 835" width="1308" height="835">
  <g class="nc">
    <circle cx="33" cy="81" r="24"/><circle cx="33" cy="149" r="24"/><circle cx="33" cy="233" r="24"/><circle cx="33" cy="329" r="24"/><circle cx="33" cy="539" r="24"/><circle cx="33" cy="716" r="24"/><circle cx="33" cy="785" r="24"/>
    <path d="M57 82L112 71M57 146L132 100M57 236L148 225M57 330L466 333M54 526L148 579M53 725L394 766M57 782L254 802"/>
  </g>
  <g class="nh">
    <path d="M124 68L108 77 105 66z"/><path d="M146 91L137 106 129 94z"/><path d="M162 223L147 232 146 218z"/><path d="M481 333L465 340 465 326z"/><path d="M162 587L145 586 152 573z"/><path d="M408 768L393 773 395 759z"/><path d="M268 803L253 809 254 795z"/>
  </g>
  <g class="nt">
    <text x="33" y="91">1</text><text x="33" y="159">2</text><text x="33" y="243">3</text><text x="33" y="339">4</text><text x="33" y="549">5</text><text x="33" y="726">6</text><text x="33" y="795">7</text>
  </g>
</svg>
</body>
</html>
```
FILE: styles.css
```css
* { box-sizing: border-box; }
html, body { margin: 0; height: 100%; }
body {
  padding: 23px 0 0 109px;
  background: #fff;
  font: 12px/1.2 "Noto Sans", "Noto Sans CJK SC", sans-serif;
  color: #222;
  position: relative;
  overflow: hidden;
}
.defs { position: absolute; }
.window {
  width: 1184px;
  height: 795px;
  display: flex;
  flex-direction: column;
  border: 1px solid #7c7c7c;
  border-top: 0;
  background: #f0f0f0;
}

.titlebar {
  height: 30px;
  background: #4a4846;
  display: flex;
  align-items: center;
  padding-left: 6px;
  flex: none;
}
.logo { display: block; }
.title { color: #dcdcdc; font-size: 12px; margin-left: 4px; }
.winbtns { margin-left: auto; display: flex; gap: 35px; padding-right: 17px; }

.menubar {
  height: 21px;
  background: #fff;
  border-bottom: 1px solid #c8c8c8;
  display: flex;
  align-items: center;
  flex: none;
}
.menu { padding: 0 5px; width: 49.800px; color: #222; white-space: nowrap; }

.toolbar {
  height: 39px;
  flex: none;
  background: #f0f0f0;
  display: flex;
  align-items: center;
  padding-bottom: 1px;
  border-bottom: 1px solid #8e8e8e;
}
.tbtn {
  width: 37px;
  height: 36px;
  display: flex;
  align-items: center;
  justify-content: center;
  flex: none;
}
.tbtn svg { width: 26px; height: 26px; display: block; }
.tbtn.on { background: #c4dff6; outline: 1px solid #a9d2f4; outline-offset: -1px; }
.help { font: bold 18px "Liberation Sans", sans-serif; fill: #fff; text-anchor: middle; }
.sep { width: 7.250px; height: 36px; flex: none; display: block; }
.sep::before { content: ""; display: block; width: 1px; height: 33px; margin: 1px 0 0 3px; background: #a8a8a8; }

.main { flex: 1; display: flex; min-height: 0; }
.side {
  width: 280px;
  flex: none;
  padding: 5px 4px 0 6px;
  display: flex;
  flex-direction: column;
  background: #f0f0f0;
}
.tree {
  height: 366px;
  width: 266px;
  flex: none;
  border: 1px solid #9f9f9f;
  background: #fff;
  padding: 1px 0 0 1.500px;
  box-shadow: 0 0 0 1px #e6e6e6 inset;
}
.row { display: flex; height: 19.060px; align-items: center; }
.g {
  width: 21.500px;
  height: 19.060px;
  flex: none;
  position: relative;
  display: flex;
  align-items: center;
  justify-content: center;
}
.g.v::before, .g.t::before, .g.l::before, .g.b::before {
  content: "";
  position: absolute;
  left: 50%;
  border-left: 1px dotted #888;
}
.g.v::before, .g.t::before { top: 0; bottom: 0; }
.g.l::before { top: 0; bottom: 50%; }
.g.b::before { top: 50%; bottom: 0; }
.g.t::after, .g.l::after, .g.b::after {
  content: "";
  position: absolute;
  left: 50%;
  right: 0;
  top: 50%;
  border-top: 1px dotted #888;
}
.x {
  width: 11px;
  height: 11px;
  position: relative;
  z-index: 1;
  border: 1px solid #bcbcbc;
  background: linear-gradient(#5a6f9e, #5a6f9e) center / 5px 1px no-repeat, linear-gradient(#f4f4f4, #d8d8d8);
}
.x.p {
  background: linear-gradient(#5a6f9e, #5a6f9e) center / 5px 1px no-repeat, linear-gradient(#5a6f9e, #5a6f9e) center / 1px 5px no-repeat, linear-gradient(#f4f4f4, #d8d8d8);
}
.ic { width: 21.500px; flex: none; display: flex; justify-content: center; align-items: center; }
.ti { width: 20px; height: 18px; display: block; flex: none; }
.lb { padding: 0 2px; line-height: 19px; white-space: nowrap; color: #222; }
.lb.sel { background: #f0f0f0; }

.split { height: 2px; margin-top: 9px; background: #c4c4c4; flex: none; width: 266px; }
.tabs { height: 36px; margin-top: 2px; display: flex; flex: none; margin-left: -1px; }
.tab { width: 38px; height: 36px; display: flex; align-items: center; justify-content: center; }
.tab svg { width: 26px; height: 26px; display: block; }
.tab.on { background: #c4dff6; outline: 1px solid #a9d2f4; outline-offset: -1px; }
.props {
  margin-top: 1px;
  height: 254px;
  width: 266px;
  flex: none;
  border: 1px solid #b4b4b4;
  background: #fff;
  padding: 1px;
}
.phead {
  height: 21.500px;
  background: #c4c4c4;
  display: flex;
  align-items: center;
  color: #808080;
  font-weight: 700;
  gap: 5px;
  padding-left: 3px;
}
.pbox { width: 11px; height: 11px; border: 1px solid #222; background: linear-gradient(#222, #222) center / 7px 1px no-repeat; flex: none; }
.prow {
  height: 21.500px;
  display: grid;
  grid-template-columns: 115px 1fr;
  padding-left: 17px;
  background: linear-gradient(#c4c4c4, #c4c4c4) left / 17px 100% no-repeat;
}
.pk, .pv { padding-left: 2px; display: flex; align-items: center; border-bottom: 1px solid #d8d8d8; white-space: nowrap; }
.pk { border-right: 1px solid #d8d8d8; }
.btncell { padding: 1px; }
.ok {
  width: 100%;
  height: 100%;
  font: inherit;
  color: #222;
  background: #e1e1e1;
  border: 1px solid #adadad;
  padding: 0;
}

.viewcol { flex: 1; display: flex; flex-direction: column; min-width: 0; border-left: 1px solid #a8a8a8; }
.viewport {
  flex: 1;
  position: relative;
  background: linear-gradient(#063a7c, #ffffff);
  overflow: hidden;
}
.brand { position: absolute; right: 15px; top: 5px; font-family: "Liberation Sans", sans-serif; }
.bname { color: #e8402f; font-size: 21px; line-height: 22px; }
.bver { color: #d4dae4; font-size: 10.700px; line-height: 12px; }
.model { position: absolute; left: 189px; top: 57px; }
.triad { position: absolute; left: 50px; top: 535px; overflow: visible; }
.ty, .tx, .tz { font: 12px "Liberation Sans", sans-serif; }
.ty { fill: #32e832; }
.tx { fill: #f03030; }
.tz { fill: #4a5cf0; }
.controls {
  height: 38px;
  flex: none;
  display: flex;
  align-items: center;
  gap: 9.500px;
  padding: 0 12px 0 4px;
  background: #f0f0f0;
}
.cbtn {
  width: 27px;
  height: 27px;
  flex: none;
  background: #e4e4e4;
  border: 1px solid #c6c6c6;
  border-radius: 1px;
  display: block;
}
.cbtn svg { width: 25px; height: 25px; display: block; }
.slider {
  flex: 1;
  height: 14px;
  margin-left: 7px;
  background: #e6e9e9;
  position: relative;
}
.thumb { position: absolute; left: 0; top: -2px; }

.status {
  height: 22px;
  flex: none;
  display: flex;
  border-top: 1px solid #cfcfcf;
  background: #f0f0f0;
}
.sec { width: 293px; border-right: 1px solid #d6d6d6; line-height: 21px; padding-left: 1px; white-space: nowrap; }
.sec.s1 { width: 292px; }
.sec.last {
  flex: 1;
  border-right: 0;
  background: radial-gradient(circle, #a8a8a8 0 1px, transparent 1px) right 1px bottom 1px / 3px 3px no-repeat, radial-gradient(circle, #a8a8a8 0 1px, transparent 1px) right 4px bottom 1px / 3px 3px no-repeat, radial-gradient(circle, #a8a8a8 0 1px, transparent 1px) right 1px bottom 4px / 3px 3px no-repeat;
}

.notes { position: absolute; left: 0; top: 0; pointer-events: none; }
.nc circle { fill: #fff; stroke: #f00; stroke-width: 4; }
.nc path { fill: none; stroke: #f00; stroke-width: 4; }
.nh path { fill: #f00; }
.nt text { font: bold 31px "Liberation Sans", sans-serif; fill: #000; text-anchor: middle; }
```
